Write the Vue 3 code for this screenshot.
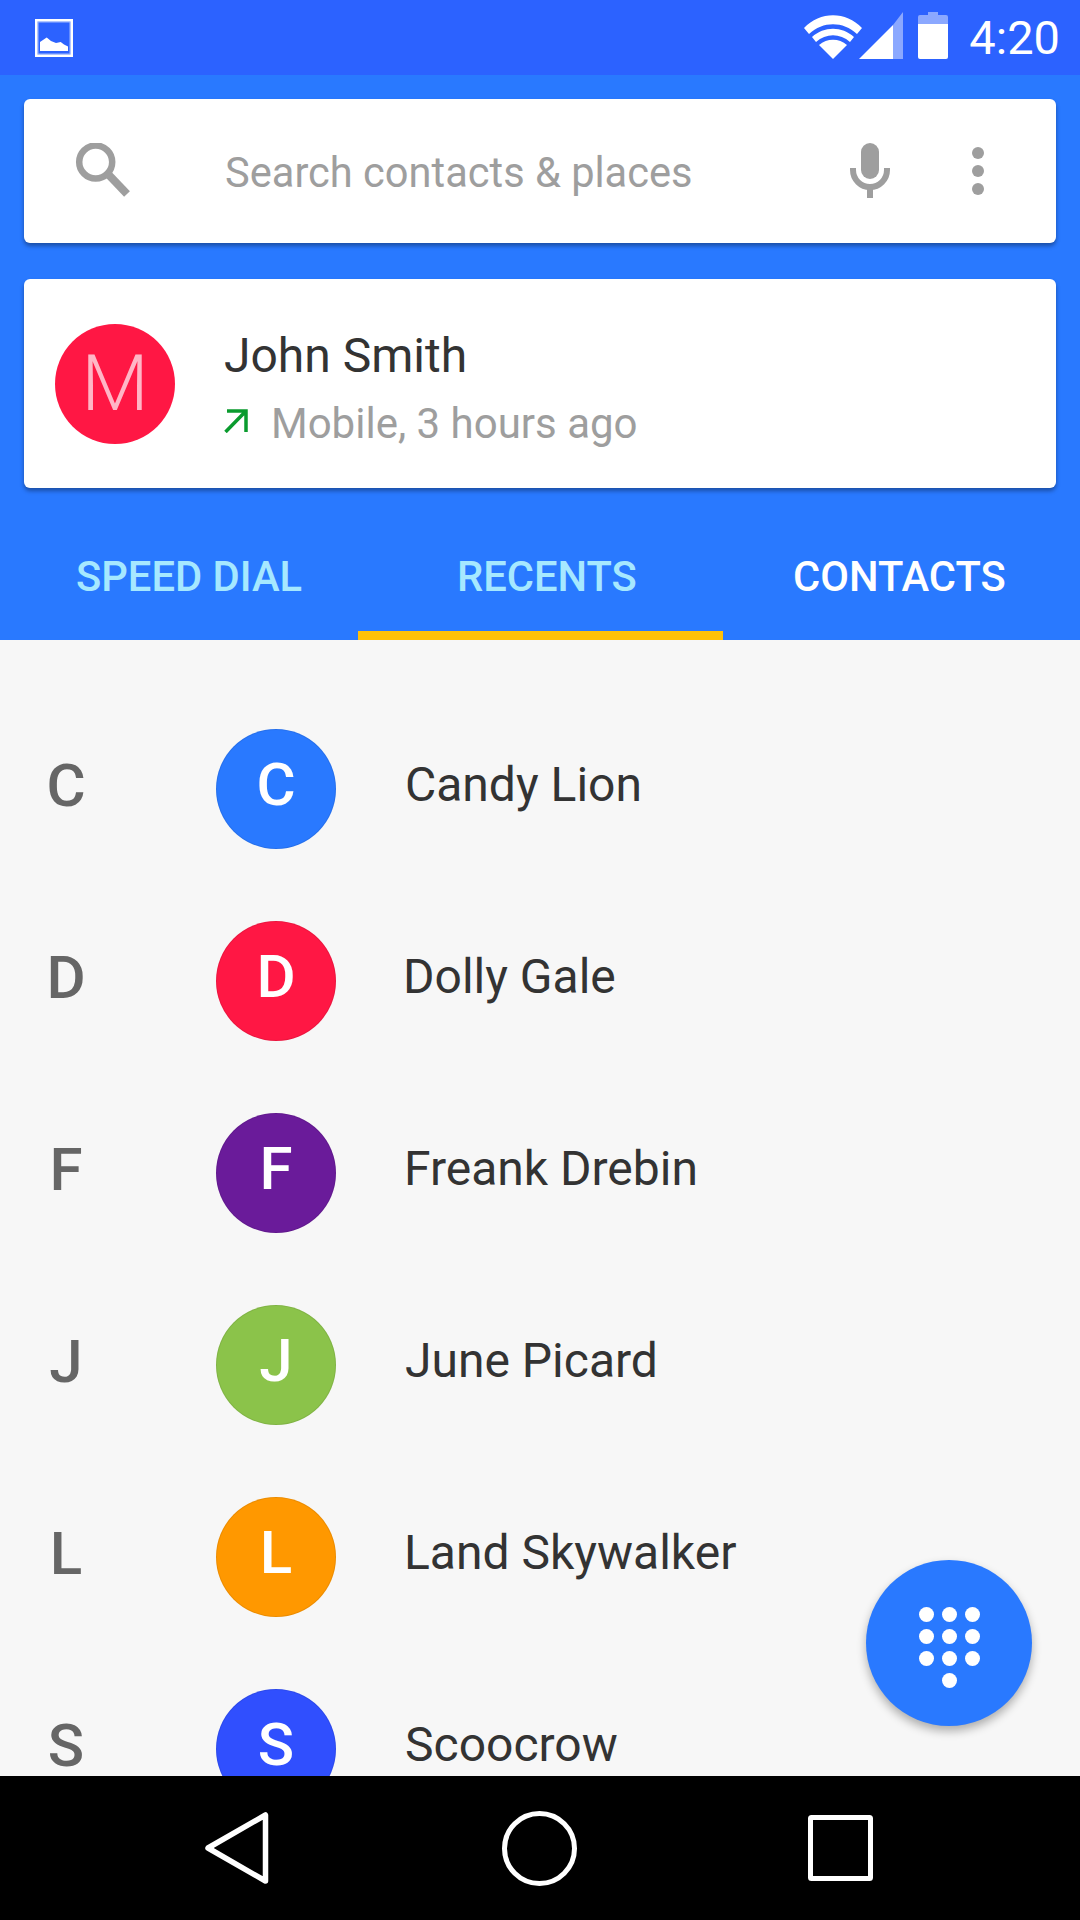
<template>
  <div class="phone">
    <div class="status-bar">
      <svg class="status-photo" viewBox="0 0 38 38" width="38" height="38">
        <rect x="1.250" y="1.250" width="35.500" height="35.500" fill="none" stroke="#fff" stroke-width="2.500" />
        <rect x="3" y="3" width="32" height="32" fill="none" stroke="#fff" stroke-width="1" opacity="0.55" />
        <path d="M5 32V23L11.700 18.500 16 22 21 24 25.700 23 29 25.500 33 27.500V32Z" fill="#fff" />
      </svg>
      <div class="status-right">
        <svg class="status-wifi" viewBox="0 0 58 44" width="58" height="44">
          <path d="M0 13C16-4 42-4 58 13L53 19C39 6 19 6 5 19Z" fill="#fff" />
          <path d="M8 22C20 11 38 11 50 22L46 27C36 18 22 18 12 27Z" fill="#fff" />
          <path d="M15 30C23 23 35 23 43 30L29 44Z" fill="#fff" />
        </svg>
        <svg class="status-signal" viewBox="0 0 44 47" width="44" height="47">
          <path d="M0 47L34 13V47Z" fill="#fff" />
          <path d="M34 13L44 0V47H34Z" fill="#fff" opacity="0.45" />
        </svg>
        <svg class="status-battery" viewBox="0 0 30 47" width="30" height="47">
          <path d="M10 0H20V3H28Q30 3 30 5V12H0V5Q0 3 2 3H10Z" fill="#fff" opacity="0.45" />
          <path d="M0 12H30V45Q30 47 28 47H2Q0 47 0 45Z" fill="#fff" />
        </svg>
        <span class="status-time">4:20</span>
      </div>
    </div>

    <div class="header">
      <div class="search-card">
        <svg class="search-icon" viewBox="0 0 58 56" width="58" height="56">
          <circle cx="21.700" cy="19" r="16.500" fill="none" stroke="#9e9e9e" stroke-width="6.500" />
          <path d="M33 30L53 51" fill="none" stroke="#9e9e9e" stroke-width="8" />
        </svg>
        <span class="search-text">Search contacts &amp; places</span>
        <svg class="mic-icon" viewBox="0 0 42 56" width="42" height="56">
          <rect x="12" y="0" width="18" height="36" rx="9" fill="#9e9e9e" />
          <path d="M4 25V27A17 17 0 0 0 38 27V25" fill="none" stroke="#9e9e9e" stroke-width="6" />
          <rect x="18" y="44" width="6" height="11" fill="#9e9e9e" />
        </svg>
        <div class="more-icon">
          <i></i><i></i><i></i>
        </div>
      </div>

      <div class="recent-card">
        <div class="recent-avatar">M</div>
        <div class="recent-info">
          <div class="recent-name">John Smith</div>
          <div class="recent-sub">
            <svg viewBox="0 0 24 24" width="24" height="24">
              <path d="M1.500 23L21 3M3 2H22V23" fill="none" stroke="#0a9b2e" stroke-width="3.500" />
            </svg>
            <span>Mobile, 3 hours ago</span>
          </div>
        </div>
      </div>

      <div class="tabs">
        <div class="tab tab-speed">SPEED DIAL</div>
        <div class="tab tab-recents">RECENTS</div>
        <div class="tab tab-contacts">CONTACTS</div>
      </div>
    </div>

    <div class="list">
      <div v-for="c in contacts" :key="c.name" class="row">
        <span class="row-letter">{{ c.letter }}</span>
        <span class="row-avatar" :style="{ background: c.color }">{{ c.letter }}</span>
        <span class="row-name" :style="{ marginLeft: 69 + c.nudge + 'px' }">{{ c.name }}</span>
      </div>
    </div>

    <div class="fab">
      <div class="dial">
        <i v-for="n in 11" :key="n" :class="{ blank: n === 10 }"></i>
      </div>
    </div>

    <div class="nav-bar">
      <svg viewBox="0 0 64 72" width="64" height="72">
        <path d="M3 36L60.500 3V69Z" fill="none" stroke="#fff" stroke-width="5.500" stroke-linejoin="round" />
      </svg>
      <svg class="nav-home" viewBox="0 0 75 75" width="75" height="75">
        <circle cx="37.500" cy="37.500" r="35" fill="none" stroke="#fff" stroke-width="5" />
      </svg>
      <svg viewBox="0 0 65 66" width="65" height="66">
        <rect x="2.500" y="2.500" width="60" height="61" rx="1" fill="none" stroke="#fff" stroke-width="5" />
      </svg>
    </div>
  </div>
</template>

<script setup>
const contacts = [
  { letter: 'C', name: 'Candy Lion', color: '#2979ff', nudge: 0 },
  { letter: 'D', name: 'Dolly Gale', color: '#ff1744', nudge: -2 },
  { letter: 'F', name: 'Freank Drebin', color: '#6a1b9a', nudge: -1 },
  { letter: 'J', name: 'June Picard', color: '#8bc34a', nudge: 0 },
  { letter: 'L', name: 'Land Skywalker', color: '#ff9800', nudge: -1 },
  { letter: 'S', name: 'Scoocrow', color: '#304ffe', nudge: 0 }
]
</script>

<style>
html, body {
  margin: 0;
  background: #f7f7f7;
}
</style>

<style scoped>
.phone {
  position: relative;
  width: 1080px;
  height: 1920px;
  display: flex;
  flex-direction: column;
  overflow: hidden;
  background: #f7f7f7;
  font-family: Roboto, "Liberation Sans", sans-serif;
}

.status-bar {
  height: 75px;
  flex: none;
  display: flex;
  align-items: center;
  justify-content: space-between;
  padding: 0 20px 0 35px;
  background: #2c62ff;
}

.status-right {
  display: flex;
  align-items: center;
}

.status-wifi { margin-top: -2px; }
.status-signal { margin-left: -3px; margin-top: -4px; }
.status-battery { margin-left: 15px; margin-top: -4px; }

.status-time {
  margin-left: 21px;
  font-size: 47px;
  line-height: 46px;
  color: #fff;
}

.header {
  flex: none;
  height: 565px;
  box-sizing: border-box;
  padding: 24px 24px 0;
  display: flex;
  flex-direction: column;
  background: #2979ff;
}

.search-card {
  height: 144px;
  flex: none;
  display: flex;
  align-items: center;
  background: #fff;
  border-radius: 6px;
  box-shadow: 0 3px 4px rgba(0, 0, 0, 0.35);
}

.search-icon { margin-left: 50px; }

.search-text {
  margin-left: 93px;
  width: 624px;
  padding-top: 2px;
  font-size: 41.600px;
  color: #9e9e9e;
}

.more-icon {
  margin-left: 81px;
  display: flex;
  flex-direction: column;
  gap: 6px;
}

.more-icon i {
  display: block;
  width: 12px;
  height: 12px;
  border-radius: 50%;
  background: #9e9e9e;
}

.recent-card {
  margin-top: 36px;
  height: 209px;
  flex: none;
  display: flex;
  align-items: center;
  background: #fff;
  border-radius: 6px;
  box-shadow: 0 3px 4px rgba(0, 0, 0, 0.35);
}

.recent-avatar {
  margin-left: 31px;
  width: 120px;
  height: 120px;
  border-radius: 50%;
  background: #ff1744;
  color: #ffb6c6;
  font-size: 78px;
  font-weight: 300;
  line-height: 120px;
  text-align: center;
}

.recent-info {
  margin-left: 49px;
  padding-top: 11px;
}

.recent-name {
  font-size: 48px;
  line-height: 54px;
  color: #333;
}

.recent-sub {
  margin-top: 16px;
  display: flex;
  align-items: center;
  gap: 23px;
  font-size: 42px;
  line-height: 50px;
  color: #9e9e9e;
}

.recent-sub svg { margin-top: -6px; }

.tabs {
  margin: auto -24px 0;
  height: 112px;
  flex: none;
  display: grid;
  grid-template-columns: 358px 365px 357px;
}

.tab {
  font-size: 41.700px;
  font-weight: 500;
  line-height: 98px;
  color: #a6e8ff;
}

.tab-speed { padding-left: 76px; }
.tab-recents { padding-left: 99px; border-bottom: 9px solid #ffc107; height: 112px; box-sizing: border-box; }
.tab-contacts { padding-left: 70px; color: #fff; }

.list {
  flex: 1;
  min-height: 0;
  padding-top: 53px;
  overflow: hidden;
}

.row {
  height: 192px;
  display: flex;
  align-items: center;
}

.row-letter {
  width: 132px;
  flex: none;
  margin-right: 84px;
  margin-top: -8px;
  font-size: 60px;
  font-weight: 500;
  color: #666;
  text-align: center;
}

.row-avatar {
  width: 120px;
  height: 120px;
  flex: none;
  border-radius: 50%;
  box-shadow: inset 0 0 0 1px rgba(0, 0, 0, 0.08);
  color: #fff;
  font-size: 60px;
  font-weight: 500;
  line-height: 112px;
  text-align: center;
}

.row-name {
  margin-top: -9px;
  font-size: 48px;
  color: #333;
}

.fab {
  position: absolute;
  left: 866px;
  top: 1560px;
  width: 166px;
  height: 166px;
  border-radius: 50%;
  display: flex;
  align-items: center;
  justify-content: center;
  background: #2979ff;
  box-shadow: 0 5px 10px rgba(0, 0, 0, 0.3);
}

.dial {
  margin-top: 8px;
  display: grid;
  grid-template-columns: repeat(3, 15px);
  gap: 7px 8px;
}

.dial i {
  display: block;
  height: 15px;
  border-radius: 50%;
  background: #fff;
}

.dial i.blank { background: transparent; }

.nav-bar {
  position: relative;
  height: 144px;
  flex: none;
  box-sizing: border-box;
  padding: 0 207px 0 205px;
  display: flex;
  align-items: center;
  justify-content: space-between;
  background: #000;
}

.nav-home { margin-left: 2px; }
</style>
